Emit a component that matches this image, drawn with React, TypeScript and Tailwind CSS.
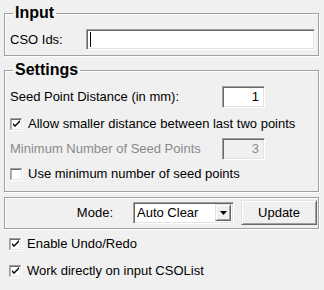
import React from 'react';

const sunken =
  'border border-t-[#a0a0a0] border-l-[#a0a0a0] border-b-white border-r-white shadow-[inset_1px_1px_0_#696969,inset_-1px_-1px_0_#e3e3e3]';
const raised =
  'border border-t-[#e3e3e3] border-l-[#e3e3e3] border-b-[#696969] border-r-[#696969] shadow-[inset_1px_1px_0_#ffffff,inset_-1px_-1px_0_#a0a0a0]';
const etched = 'border border-[#a0a0a0] shadow-[inset_1px_1px_0_#ffffff,1px_1px_0_#ffffff]';

function CheckBox({ checked }: { checked: boolean }) {
  return (
    <svg width="13" height="13" viewBox="0 0 13 13" className="shrink-0">
      <rect x="0" y="0" width="13" height="13" fill="#ffffff" />
      <path d="M0 12.5V0.5H12.5" fill="none" stroke="#a0a0a0" />
      <path d="M1 11.5V1.5H11.5" fill="none" stroke="#696969" />
      <path d="M0.5 13V12.5H12.5V0" fill="none" stroke="#ffffff" />
      <path d="M1.5 11.5H11.5V1" fill="none" stroke="#e3e3e3" />
      {checked && (
        <path d="M3 5v2l2 2 5-5V2L5 7 3 5z" fill="#000000" />
      )}
    </svg>
  );
}

function CheckRow({ checked, label, className = '' }: { checked: boolean; label: string; className?: string }) {
  return (
    <div className={`flex items-center h-[16px] gap-[5px] pl-[5px] ${className}`}>
      <CheckBox checked={checked} />
      <span>{label}</span>
    </div>
  );
}

function Legend({ children }: { children: React.ReactNode }) {
  return (
    <legend className="ml-[8px] px-[2px] text-[16px] leading-[18px] font-bold text-black">{children}</legend>
  );
}

export default function App() {
  return (
    <div
      className="w-[324px] h-[290px] bg-[#f0f0f0] text-[13px] text-black overflow-hidden pt-[4px]"
      style={{ fontFamily: '"Liberation Sans", Arial, sans-serif' }}
    >
      {/* Input */}
      <fieldset className={`ml-[4px] w-[315px] ${etched}`}>
        <Legend>Input</Legend>
        <div className="flex items-center pl-[5px] pr-[3px] pt-[7px] pb-[5px]">
          <span className="w-[76px]">CSO Ids:</span>
          <div className={`flex-1 h-[21px] bg-white flex items-center ${sunken}`}>
            <span className="ml-[3px] w-px h-[15px] bg-black" />
          </div>
        </div>
      </fieldset>

      {/* Settings */}
      <fieldset className={`ml-[4px] mt-[5px] w-[315px] ${etched}`}>
        <Legend>Settings</Legend>
        <div className="flex flex-col pt-[7px] pb-[9px]">
          <div className="flex items-center h-[22px] pl-[5px]">
            <span className="w-[212px]">Seed Point Distance (in mm):</span>
            <div className={`w-[43px] h-[22px] bg-white flex items-center justify-end pr-[5px] ${sunken}`}>1</div>
          </div>
          <CheckRow checked label="Allow smaller distance between last two points" className="mt-[8px]" />
          <div className="flex items-center h-[22px] pl-[5px] mt-[6px] text-[#8a8a8a]">
            <span className="w-[212px]">Minimum Number of Seed Points</span>
            <div className={`w-[43px] h-[22px] bg-[#f0f0f0] flex items-center justify-end pr-[5px] ${sunken}`}>3</div>
          </div>
          <CheckRow checked={false} label="Use minimum number of seed points" className="mt-[6px]" />
        </div>
      </fieldset>

      {/* Mode */}
      <div className={`ml-[4px] mt-[5px] w-[315px] flex items-center pt-[2px] pb-[3px] ${etched}`}>
        <span className="w-[108px] text-right">Mode:</span>
        <div className={`ml-[20px] w-[101px] h-[22px] bg-white flex items-center pr-[2px] ${sunken}`}>
          <span className="flex-1 pl-[3px]">Auto Clear</span>
          <div className={`w-[16px] h-[17px] bg-[#f0f0f0] flex items-center justify-center ${raised}`}>
            <svg width="7" height="4" viewBox="0 0 7 4">
              <path d="M0 0h7L3.5 4z" fill="#000000" />
            </svg>
          </div>
        </div>
        <div className={`ml-[7px] w-[76px] h-[25px] bg-[#f0f0f0] flex items-center justify-center ${raised}`}>
          Update
        </div>
      </div>

      <CheckRow checked label="Enable Undo/Redo" className="ml-[4px] mt-[7px]" />
      <CheckRow checked label="Work directly on input CSOList" className="ml-[4px] mt-[11px]" />
    </div>
  );
}
